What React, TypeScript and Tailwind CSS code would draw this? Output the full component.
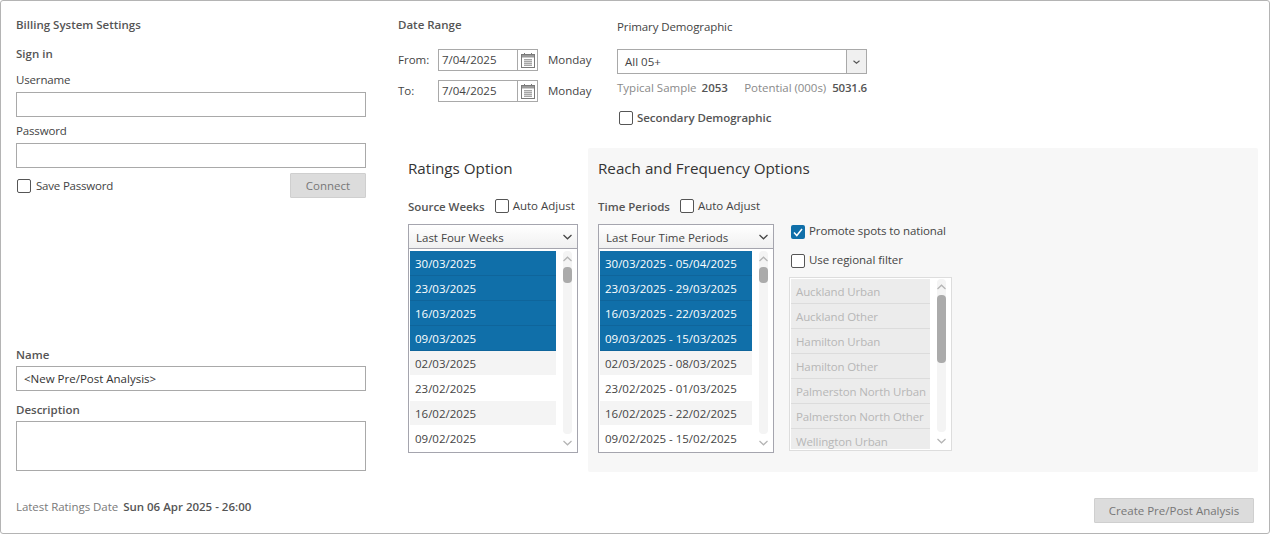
const selectedWeeks = ["30/03/2025", "23/03/2025", "16/03/2025", "09/03/2025"];
const otherWeeks = ["02/03/2025", "23/02/2025", "16/02/2025", "09/02/2025"];
const selectedPeriods = [
  "30/03/2025 - 05/04/2025",
  "23/03/2025 - 29/03/2025",
  "16/03/2025 - 22/03/2025",
  "09/03/2025 - 15/03/2025",
];
const otherPeriods = [
  "02/03/2025 - 08/03/2025",
  "23/02/2025 - 01/03/2025",
  "16/02/2025 - 22/02/2025",
  "09/02/2025 - 15/02/2025",
];
const regions = [
  "Auckland Urban",
  "Auckland Other",
  "Hamilton Urban",
  "Hamilton Other",
  "Palmerston North Urban",
  "Palmerston North Other",
  "Wellington Urban",
];

const Chevron = ({ up = false, color = "#b4b4b4" }: { up?: boolean; color?: string }) => (
  <svg width="9" height="6" viewBox="0 0 9 6" fill="none" className="block">
    <path d={up ? "M0.5 5L4.5 1.2L8.5 5" : "M0.5 1L4.5 4.8L8.5 1"} stroke={color} strokeWidth="1.2" />
  </svg>
);

const SmallChevron = () => (
  <svg width="7" height="4" viewBox="0 0 7 4" fill="none" className="block">
    <path d="M0.5 0.8L3.5 3.2L6.5 0.8" stroke="#555555" strokeWidth="1.1" />
  </svg>
);

const CalendarIcon = () => (
  <svg width="14" height="15" viewBox="0 0 14 15" fill="none" className="block">
    <rect x="0.5" y="1.5" width="13" height="13" fill="#fff" stroke="#7a7a7a" />
    <rect x="1" y="2" width="12" height="2.5" fill="#9a9a9a" />
    <path d="M3.5 0V2M10.5 0V2" stroke="#7a7a7a" />
    <path
      d="M3 6.5H11M3 8.5H11M3 10.5H11M3 12.5H11M4 6V13M6 6V13M8 6V13M10 6V13"
      stroke="#9a9a9a"
      strokeWidth="0.8"
    />
  </svg>
);

const CheckBox = ({ checked = false }: { checked?: boolean }) =>
  checked ? (
    <span className="flex size-[14px] shrink-0 items-center justify-center rounded-[2px] bg-[#106fa9]">
      <svg width="10" height="9" viewBox="0 0 10 9" fill="none">
        <path d="M1 4.5L3.8 7.5L9 1" stroke="#fff" strokeWidth="1.5" />
      </svg>
    </span>
  ) : (
    <span className="block size-[14px] shrink-0 rounded-[2px] border border-[#555555] bg-white" />
  );

const TextBox = ({ value = "", className = "h-[25px]" }: { value?: string; className?: string }) => (
  <div className={`w-[350px] border border-[#a9a9a9] bg-white pl-[7px] leading-[23px] text-[#333333] ${className}`}>
    {value}
  </div>
);

const DateField = ({ label, className }: { label: string; className: string }) => (
  <div className={`flex h-[22px] items-center ${className}`}>
    <span className="w-[40px]">{label}</span>
    <div className="flex h-[22px] w-[100px] border border-[#a9a9a9] bg-white">
      <span className="w-[79px] border-r border-[#a9a9a9] pl-[3px] leading-[19px]">7/04/2025</span>
      <span className="flex flex-1 items-center justify-center">
        <CalendarIcon />
      </span>
    </div>
    <span className="ml-[10px]">Monday</span>
  </div>
);

const Scroller = ({ thumb, track }: { thumb: string; track: string }) => (
  <div className="flex w-[9px] flex-col items-center">
    <div className={`flex w-[9px] flex-col items-center rounded-[4px] bg-[#f4f4f4] pt-[5px] ${track}`}>
      <Chevron up />
      <div className={`mt-[5px] w-[9px] rounded-[4px] bg-[#ababab] ${thumb}`} />
    </div>
    <div className="mt-[6px]">
      <Chevron />
    </div>
  </div>
);

const WeekList = ({
  title,
  selected,
  other,
  boxWidth,
  rowWidth,
}: {
  title: string;
  selected: string[];
  other: string[];
  boxWidth: string;
  rowWidth: string;
}) => (
  <div className={`mt-[10px] h-[229px] border border-[#a5a5ae] bg-white ${boxWidth}`}>
    <div className="flex h-[24px] items-center justify-between border-b border-[#a5a5ae] bg-gradient-to-b from-white to-[#f0f0f0] pr-[5px] pl-[7px]">
      <span className="mt-[2px]">{title}</span>
      <Chevron color="#444444" />
    </div>
    <div className="mt-[2px] flex pl-[1px]">
      <div className={rowWidth}>
        {selected.map((row) => (
          <div
            key={row}
            className="h-[25px] border-b border-[#0f659b] bg-[#106fa9] pl-[5px] leading-[25px] text-white"
          >
            {row}
          </div>
        ))}
        {other.map((row, i) => (
          <div
            key={row}
            className={`h-[25px] pl-[5px] leading-[25px] ${i % 2 === 0 ? "border-b border-white bg-[#f4f4f4]" : "bg-white"}`}
          >
            {row}
          </div>
        ))}
      </div>
      <div className="ml-[7px]">
        <Scroller thumb="h-[16px]" track="h-[183px]" />
      </div>
    </div>
  </div>
);

const Heading = ({ children }: { children: string }) => (
  <div className="h-[22px] text-[15.2px] leading-[22px] text-[#333333]">{children}</div>
);

export default function App() {
  return (
    <div className="box-border flex h-[534px] w-[1270px] rounded-[3px] border border-[#b4b4b4] bg-white pt-[16px] pl-[15px] font-['Open_Sans',sans-serif] text-[11.5px] leading-[16px] text-[#444444]">
      <div className="w-[350px]">
        <div className="font-semibold text-[#555555]">Billing System Settings</div>
        <div className="mt-[13px] font-semibold text-[#555555]">Sign in</div>
        <div className="mt-[10px] h-[16px] tracking-[-0.15px]">Username</div>
        <TextBox className="mt-[4px] h-[25px]" />
        <div className="mt-[6px] h-[16px] tracking-[-0.15px]">Password</div>
        <TextBox className="mt-[4px] h-[25px]" />
        <div className="mt-[5px] flex h-[25px] items-center justify-between pl-[1px]">
          <div className="flex items-center gap-[5px]">
            <CheckBox />
            <span className="tracking-[-0.2px]">Save Password</span>
          </div>
          <div className="flex h-[25px] w-[76px] items-center justify-center rounded-[1px] border border-[#cfcfcf] bg-[#dcdcdc] text-[#777777]">
            Connect
          </div>
        </div>
        <div className="mt-[149px] font-semibold text-[#555555]">Name</div>
        <TextBox value="<New Pre/Post Analysis>" className="mt-[3px] h-[25px]" />
        <div className="mt-[11px] font-semibold text-[#555555]">Description</div>
        <TextBox className="mt-[3px] h-[50px]" />
        <div className="mt-[28px] flex gap-[5px]">
          <span className="tracking-[-0.05px] text-[#7a7a7a]">Latest Ratings Date</span>
          <span className="font-semibold text-[#555555]">Sun 06 Apr 2025 - 26:00</span>
        </div>
      </div>

      <div className="ml-[32px] w-[860px]">
        <div className="flex h-[131px]">
          <div className="w-[219px]">
            <div className="font-semibold text-[#555555]">Date Range</div>
            <DateField label="From:" className="mt-[16px]" />
            <DateField label="To:" className="mt-[9px]" />
          </div>
          <div className="pt-[2px]">
            <div className="tracking-[-0.1px]">Primary Demographic</div>
            <div className="mt-[14px] flex h-[25px] w-[250px] border border-[#a9a9a9] bg-white">
              <span className="flex-1 pl-[7px] leading-[24px]">All 05+</span>
              <span className="flex w-[20px] items-center justify-center border-l border-[#a9a9a9] bg-[#f0f0f0]">
                <SmallChevron />
              </span>
            </div>
            <div className="mt-[6px] flex w-[250px] justify-between">
              <span className="flex gap-[5px]">
                <span className="text-[#8a8a8a]">Typical Sample</span>
                <span className="font-semibold text-[#555555]">2053</span>
              </span>
              <span className="flex gap-[6px]">
                <span className="tracking-[-0.05px] text-[#8a8a8a]">Potential (000s)</span>
                <span className="font-semibold tracking-[-0.2px] text-[#555555]">5031.6</span>
              </span>
            </div>
            <div className="mt-[14px] flex items-center gap-[4px] pl-[2px]">
              <CheckBox />
              <span className="font-semibold tracking-[-0.05px] text-[#555555]">Secondary Demographic</span>
            </div>
          </div>
        </div>

        <div className="ml-[10px] flex">
          <div className="w-[170px] pt-[9px]">
            <Heading>Ratings Option</Heading>
            <div className="mt-[19px] flex h-[16px] items-center">
              <span className="mt-[2px] font-semibold tracking-[-0.05px] text-[#555555]">Source Weeks</span>
              <span className="ml-[10px] block">
                <CheckBox />
              </span>
              <span className="ml-[4px]">Auto Adjust</span>
            </div>
            <WeekList
              title="Last Four Weeks"
              selected={selectedWeeks}
              other={otherWeeks}
              boxWidth="w-[170px]"
              rowWidth="w-[146px]"
            />
          </div>

          <div className="ml-[10px] h-[324px] w-[670px] rounded-[2px] bg-[#f7f7f7] pt-[9px] pl-[10px]">
            <Heading>Reach and Frequency Options</Heading>
            <div className="mt-[19px] flex">
              <div className="w-[176px]">
                <div className="flex h-[16px] items-center">
                  <span className="mt-[2px] font-semibold text-[#555555]">Time Periods</span>
                  <span className="ml-[10px] block">
                    <CheckBox />
                  </span>
                  <span className="ml-[4px]">Auto Adjust</span>
                </div>
                <WeekList
                  title="Last Four Time Periods"
                  selected={selectedPeriods}
                  other={otherPeriods}
                  boxWidth="w-[176px]"
                  rowWidth="w-[152px]"
                />
              </div>

              <div className="ml-[15px] pt-[27px]">
                <div className="flex h-[14px] items-center gap-[4px] pl-[2px]">
                  <CheckBox checked />
                  <span className="-mt-[2px] tracking-[-0.1px]">Promote spots to national</span>
                </div>
                <div className="mt-[15px] flex h-[14px] items-center gap-[4px] pl-[2px]">
                  <CheckBox />
                  <span className="-mt-[2px] tracking-[-0.05px]">Use regional filter</span>
                </div>
                <div className="mt-[9px] flex h-[174px] w-[163px] border border-[#dddddd] bg-white pt-[1px] pl-[1px]">
                  <div className="h-[170px] w-[139px] overflow-hidden bg-[#ececec]">
                    {regions.map((region) => (
                      <div
                        key={region}
                        className="h-[25px] border-b border-[#dcdcdc] pl-[5px] leading-[25px] tracking-[-0.12px] text-[#b7b7b7]"
                      >
                        {region}
                      </div>
                    ))}
                  </div>
                  <div className="ml-[7px]">
                    <Scroller thumb="h-[68px]" track="h-[153px]" />
                  </div>
                </div>
              </div>
            </div>
          </div>
        </div>

        <div className="mt-[26px] flex justify-end pr-[4px]">
          <div className="flex h-[25px] w-[160px] items-center justify-center rounded-[1px] border border-[#cfcfcf] bg-[#dcdcdc] pt-[1px] text-[#777777]">
            Create Pre/Post Analysis
          </div>
        </div>
      </div>
    </div>
  );
}
